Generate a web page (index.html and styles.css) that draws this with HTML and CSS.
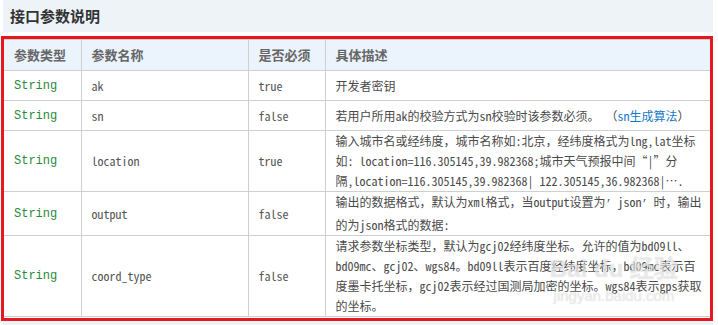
FILE: index.html
```html
<!DOCTYPE html>
<html lang="zh-CN">
<head>
<meta charset="utf-8">
<title>接口参数说明</title>
<link rel="stylesheet" href="styles.css">
</head>
<body>
<div class="page">
  <h2 class="title">接口参数说明</h2>
  <div class="frame">
    <table class="params">
      <colgroup>
        <col class="c1"><col class="c2"><col class="c3"><col class="c4">
      </colgroup>
      <thead>
        <tr><th>参数类型</th><th>参数名称</th><th>是否必须</th><th>具体描述</th></tr>
      </thead>
      <tbody>
        <tr><td class="type">String</td><td class="code">ak</td><td class="code">true</td><td class="desc">开发者密钥</td></tr>
        <tr><td class="type">String</td><td class="code">sn</td><td class="code">false</td><td class="desc">若用户所用ak的校验方式为sn校验时该参数必须。 （<a class="link" href="#">sn生成算法</a>）</td></tr>
        <tr><td class="type">String</td><td class="code">location</td><td class="code">true</td><td class="desc">输入城市名或经纬度，城市名称如:北京，经纬度格式为lng,lat坐标<br>如: location=116.305145,39.982368;城市天气预报中间“|”分<br>隔,location=116.305145,39.982368| 122.305145,36.982368|….</td></tr>
        <tr><td class="type">String</td><td class="code">output</td><td class="code">false</td><td class="desc">输出的数据格式，默认为xml格式，当output设置为<span class="q">’</span> json<span class="q">’</span> 时，输出<br>的为json格式的数据:</td></tr>
        <tr><td class="type">String</td><td class="code">coord_type</td><td class="code">false</td><td class="desc">请求参数坐标类型，默认为gcj02经纬度坐标。允许的值为bd09ll、<br>bd09mc、gcj02、wgs84。bd09ll表示百度经纬度坐标，bd09mc表示百<br>度墨卡托坐标，gcj02表示经过国测局加密的坐标。wgs84表示gps获取<br>的坐标。</td></tr>
      </tbody>
    </table>
    <div class="watermark">
      <span class="wm-logo">Bai du 经验</span>
      <span class="wm-url">jingyan.baidu.com</span>
    </div>
  </div>
  <div class="next"></div>
</div>
</body>
</html>
```
FILE: styles.css
```css
html, body {
  margin: 0;
  padding: 0;
  background: #ffffff;
}
.page {
  width: 718px;
  font-family: "Noto Sans Mono CJK SC", "Noto Sans CJK SC", monospace;
}
.title {
  margin: 0 5px 4px 3px;
  height: 32px;
  box-sizing: border-box;
  padding: 0 0 0 7px;
  background: #eef3f8;
  font-family: "Noto Sans CJK SC", sans-serif;
  font-size: 15px;
  font-weight: bold;
  line-height: 31px;
  color: #333333;
}
.frame {
  position: relative;
  margin-left: 1px;
  width: 712px;
  box-sizing: border-box;
  border: 3px solid #e8161e;
  padding-bottom: 1px;
}
.params {
  width: 706px;
  table-layout: fixed;
  border-collapse: collapse;
  font-size: 12px;
  line-height: 20px;
  color: #555555;
}
.c1 { width: 77px; }
.c2 { width: 167px; }
.c3 { width: 77px; }
.c4 { width: 385px; }
.params th,
.params td {
  border: 1px solid #cfcfcf;
  padding: 0 0 0 10px;
  height: 29px;
  text-align: left;
  vertical-align: middle;
}
.params tr > :first-child { border-left: none; }
.params tr > :last-child { border-right: none; }
.params th {
  height: 30px;
  background: #ebf3fd;
  font-family: "Noto Sans CJK SC", sans-serif;
  font-size: 13px;
  font-weight: bold;
  color: #666666;
}
.params .type {
  font-family: "Liberation Mono", monospace;
  font-size: 12px;
  color: #2a8a3c;
}
.params .code {
  color: #555555;
}
.params .desc {
  color: #4a4a4a;
  white-space: nowrap;
}
.q {
  font-family: "Liberation Mono", monospace;
  font-size: 10px;
}
.link {
  color: #1478c8;
  text-decoration: none;
}
.watermark {
  position: absolute;
  left: 546px;
  top: 212px;
  pointer-events: none;
  white-space: nowrap;
  text-align: center;
  font-family: "Liberation Sans", sans-serif;
  color: rgba(255, 255, 255, 0.5);
  text-shadow: 0 0 1px rgba(160, 160, 160, 0.5);
}
.wm-logo {
  display: block;
  font-size: 24px;
  font-weight: bold;
  line-height: 36px;
}
.wm-url {
  display: block;
  font-size: 15px;
  line-height: 18px;
}
.next {
  margin: 0 5px 0 3px;
  height: 6px;
  background: #eef3f8;
}
```
